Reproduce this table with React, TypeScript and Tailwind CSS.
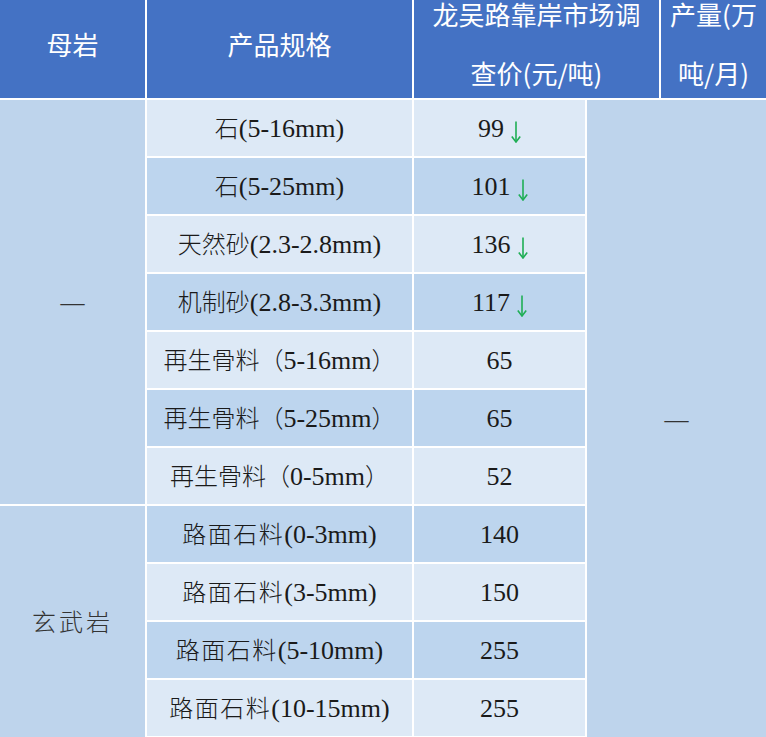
const rows = [
  { cn: "石", latin: "(5-16mm)", price: "99", down: true },
  { cn: "石", latin: "(5-25mm)", price: "101", down: true },
  { cn: "天然砂", latin: "(2.3-2.8mm)", price: "136", down: true },
  { cn: "机制砂", latin: "(2.8-3.3mm)", price: "117", down: true },
  { cn: "再生骨料（", latin: "5-16mm", end: "）", price: "65" },
  { cn: "再生骨料（", latin: "5-25mm", end: "）", price: "65" },
  { cn: "再生骨料（", latin: "0-5mm", end: "）", price: "52" },
  { cn: "路面石料", latin: "(0-3mm)", price: "140", spaced: true },
  { cn: "路面石料", latin: "(3-5mm)", price: "150", spaced: true },
  { cn: "路面石料", latin: "(5-10mm)", price: "255", spaced: true },
  { cn: "路面石料", latin: "(10-15mm)", price: "255", spaced: true },
];

const cjk = "font-['Noto_Sans_CJK_SC',sans-serif] font-light text-[24px]";

function DownArrow() {
  return (
    <svg viewBox="0 0 10 22" className="ml-[7px] inline-block h-[22px] w-[10px] align-[-6px]" fill="none" stroke="#1fae55" strokeWidth="1.6">
      <path d="M5 0.5 V21" />
      <path d="M0.8 15.5 L5 21 L9.2 15.5" />
    </svg>
  );
}

function HeadCell({ children, colSpan, last }: { children: React.ReactNode; colSpan?: number; last?: boolean }) {
  return (
    <th
      colSpan={colSpan}
      className={`h-[100px] p-0 bg-[#4472c4] border-b-2 border-white font-normal align-middle ${last ? "" : "border-r-2"}`}
    >
      <div className="flex h-[98px] items-center justify-center">
        <div className="mb-[12px] text-center text-[26px] leading-[59px] text-white">{children}</div>
      </div>
    </th>
  );
}

export default function App() {
  return (
    <div className="w-[766px] h-[737px] overflow-hidden bg-white font-['Noto_Sans_CJK_SC',sans-serif]">
      <table className="w-[766px] table-fixed border-separate border-spacing-0">
        <colgroup>
          <col className="w-[147px]" />
          <col className="w-[267px]" />
          <col className="w-[173px]" />
          <col className="w-[74px]" />
          <col className="w-[105px]" />
        </colgroup>
        <thead>
          <tr>
            <HeadCell>母岩</HeadCell>
            <HeadCell>产品规格</HeadCell>
            <HeadCell colSpan={2}>
              龙吴路靠岸市场调
              <br />
              查价(元/吨)
            </HeadCell>
            <HeadCell last>
              产量(万
              <br />
              吨/月)
            </HeadCell>
          </tr>
        </thead>
        <tbody className="font-['Liberation_Serif','Noto_Sans_CJK_SC',serif] text-[26px] text-[#1a1a1a]">
          {rows.map((r, i) => {
            const bg = i % 2 === 0 ? "bg-[#dde9f6]" : "bg-[#bdd5ee]";
            return (
              <tr key={i}>
                {i === 0 && (
                  <td rowSpan={7} className="p-0 bg-[#bed4ec] border-r-2 border-b-2 border-white text-center align-middle text-[24px] text-[#333]">
                    —
                  </td>
                )}
                {i === 7 && (
                  <td rowSpan={4} className="p-0 bg-[#bed4ec] border-r-2 border-white text-center align-middle text-[#333]">
                    <span className={`${cjk} tracking-[3px]`}>玄武岩</span>
                  </td>
                )}
                <td className={`h-[58px] p-0 ${bg} border-r-2 border-b-2 border-white text-center align-middle whitespace-nowrap`}>
                  <span className={`${cjk} ${r.spaced ? "tracking-[1.5px]" : ""}`}>{r.cn}</span>
                  <span>{r.latin}</span>
                  {r.end && <span className={cjk}>{r.end}</span>}
                </td>
                <td className={`h-[58px] p-0 ${bg} border-r-2 border-b-2 border-white text-center align-middle whitespace-nowrap`}>
                  {r.price}
                  {r.down && <DownArrow />}
                </td>
                {i === 0 && (
                  <td rowSpan={11} colSpan={2} className="p-0 bg-[#bed4ec] text-center align-middle text-[24px] text-[#333]">
                    —
                  </td>
                )}
              </tr>
            );
          })}
        </tbody>
      </table>
    </div>
  );
}
